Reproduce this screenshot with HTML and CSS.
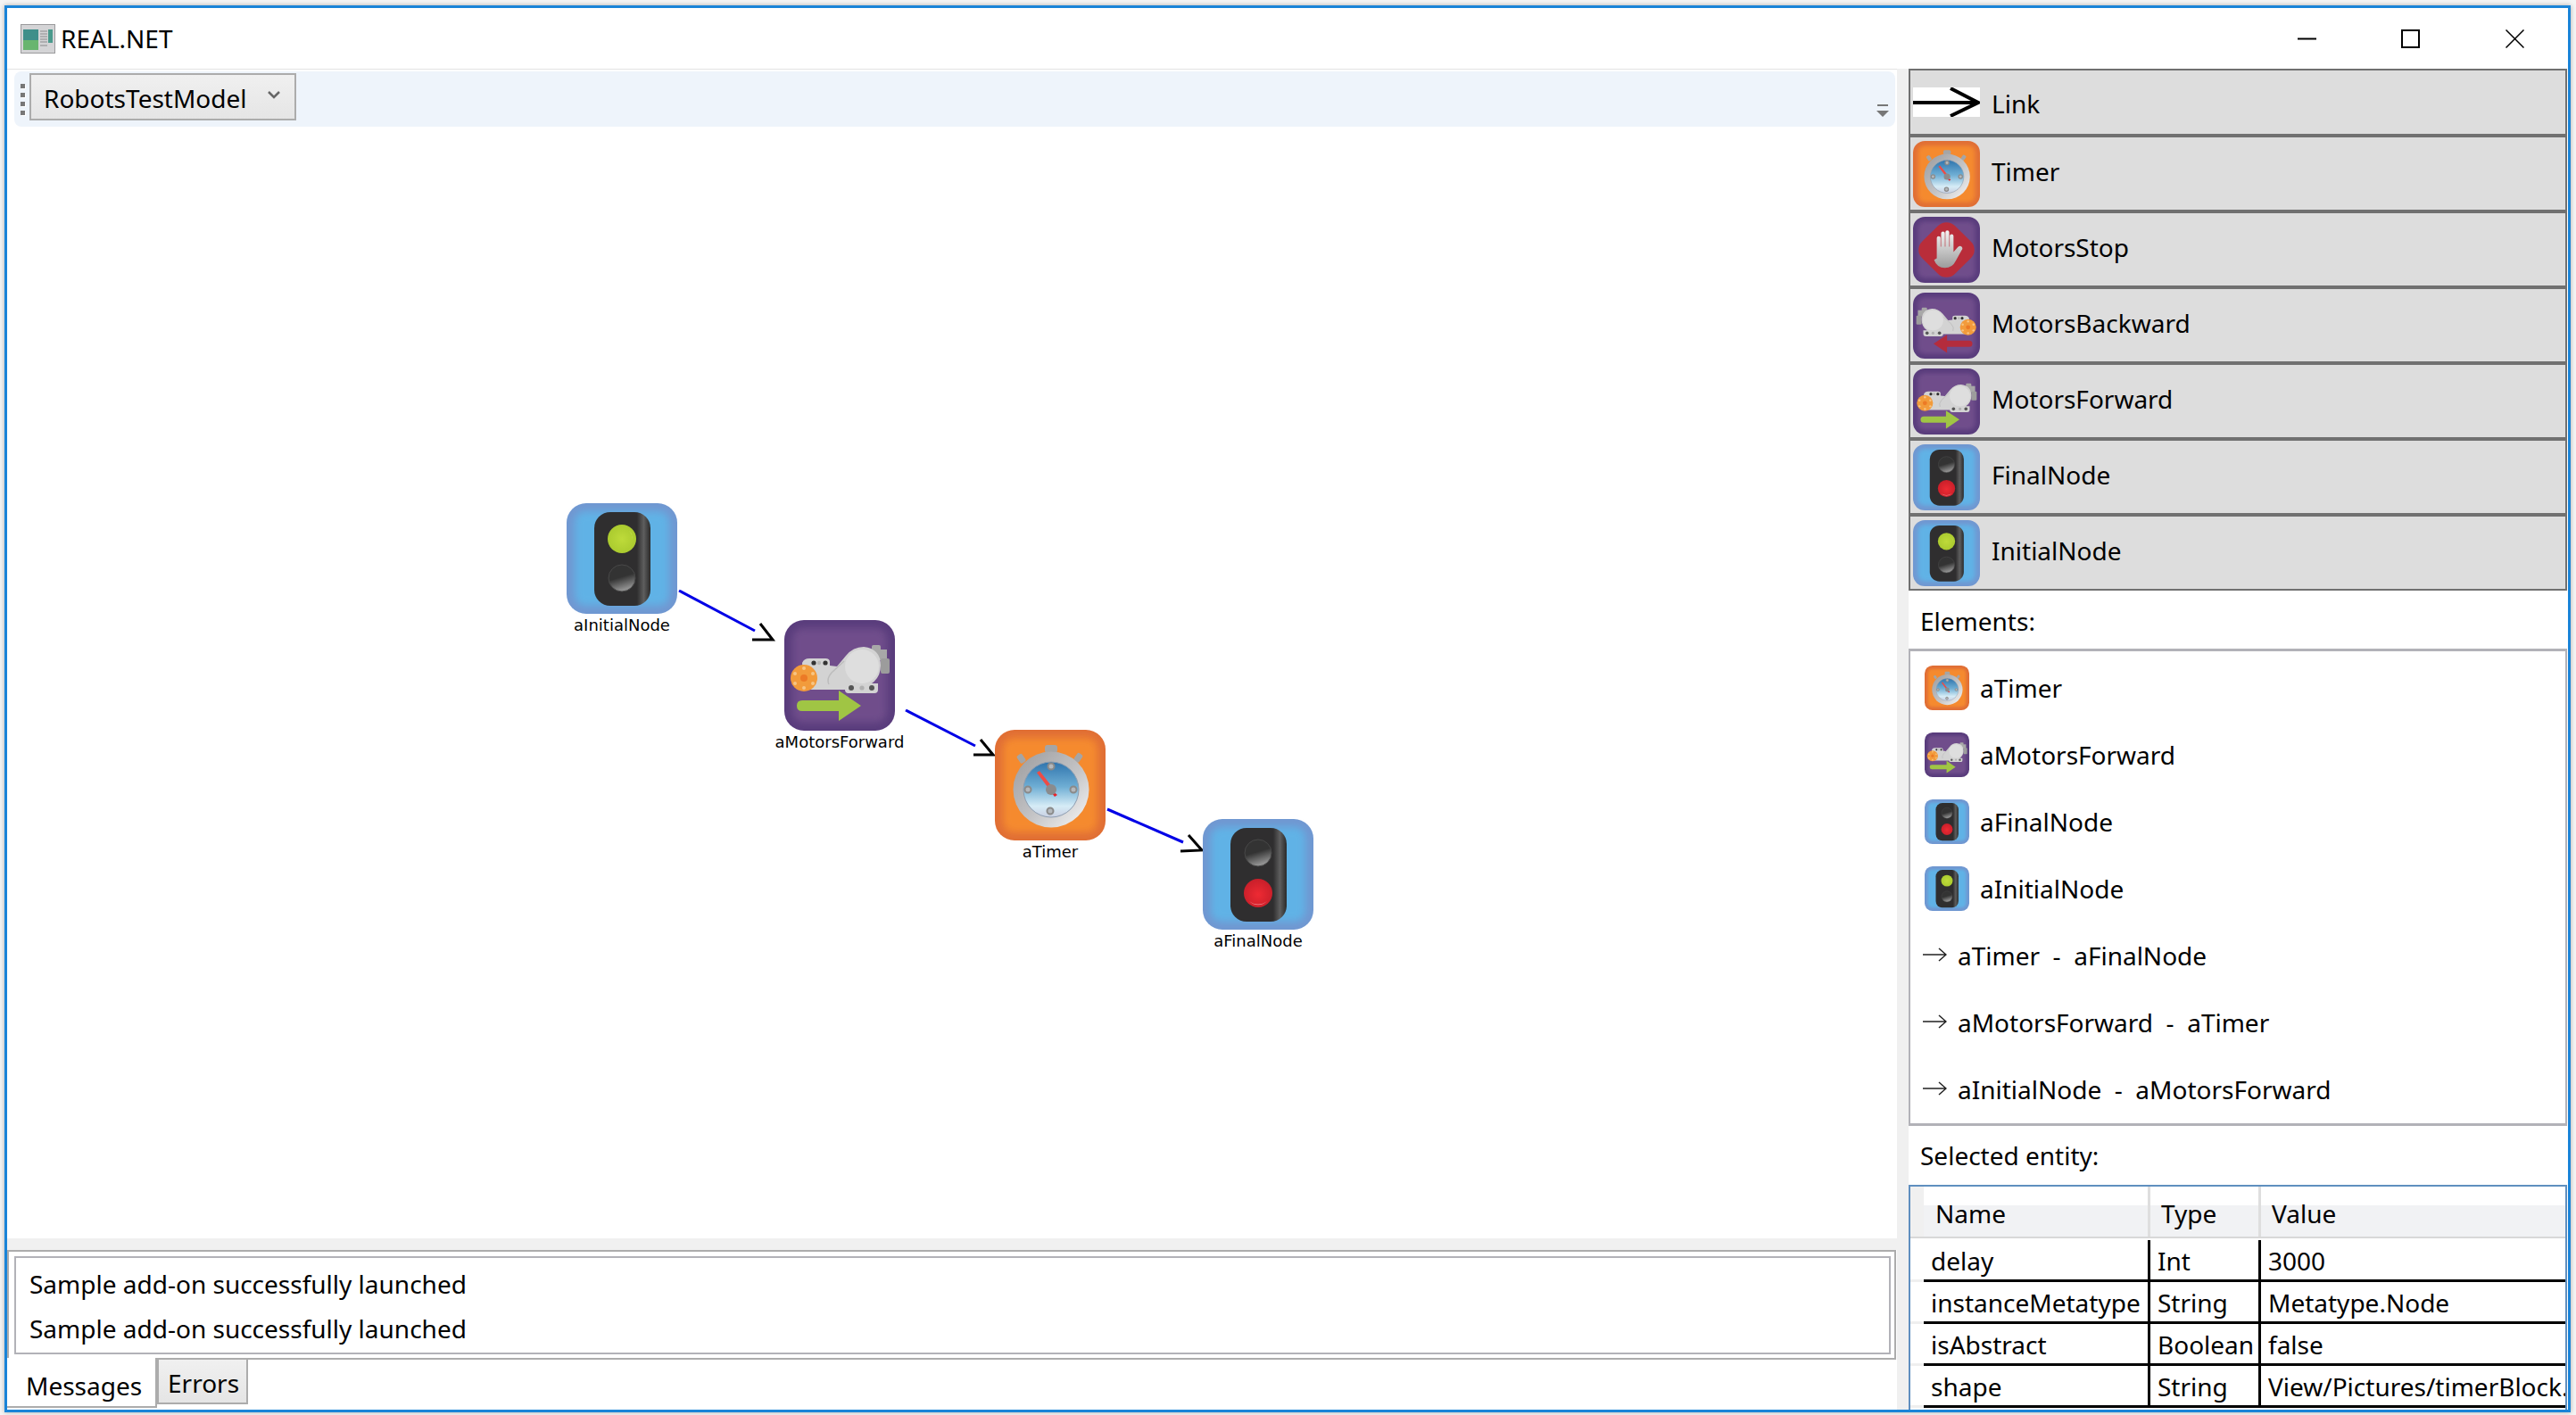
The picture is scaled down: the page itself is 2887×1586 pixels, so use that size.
FILE: index.html
```html
<!DOCTYPE html>
<html>
<head>
<meta charset="UTF-8">
<title>REAL.NET</title>
<link rel="stylesheet" href="styles.css">
</head>
<body>

<!-- shared icon parts, all drawn in a 124 x 124 box -->
<svg class="defs" width="0" height="0">
  <defs>
    <filter id="soft" x="-20%" y="-20%" width="140%" height="140%"><feGaussianBlur stdDeviation="4"/></filter>
    <linearGradient id="lampOff" x1="0" y1="0" x2="0.3" y2="1">
      <stop offset="0.55" stop-color="#333"/><stop offset="1" stop-color="#909090"/>
    </linearGradient>
    <radialGradient id="lampRed" cx="0.5" cy="0.55" r="0.55">
      <stop offset="0" stop-color="#ee2a33"/><stop offset="1" stop-color="#c81f2a"/>
    </radialGradient>
    <radialGradient id="lampGreen" cx="0.5" cy="0.5" r="0.55">
      <stop offset="0" stop-color="#bedb3a"/><stop offset="1" stop-color="#a9c92e"/>
    </radialGradient>
    <linearGradient id="dial" x1="0" y1="0" x2="0" y2="1">
      <stop offset="0" stop-color="#2f74ad"/><stop offset="0.45" stop-color="#6faed4"/>
      <stop offset="0.8" stop-color="#d6ecf6"/><stop offset="1" stop-color="#c9cfe2"/>
    </linearGradient>
    <linearGradient id="ring" x1="0" y1="0" x2="1" y2="1">
      <stop offset="0" stop-color="#9a9a9c"/><stop offset="0.55" stop-color="#c4c4c6"/><stop offset="1" stop-color="#f8f8f8"/>
    </linearGradient>
    <linearGradient id="handFill" x1="0" y1="0" x2="0" y2="1">
      <stop offset="0" stop-color="#f4f4f4"/><stop offset="1" stop-color="#9c9c9c"/>
    </linearGradient>
    <linearGradient id="barSide" x1="0" y1="0" x2="1" y2="0">
      <stop offset="0" stop-color="#2f2e2f"/><stop offset="0.76" stop-color="#2f2e2f"/>
      <stop offset="0.88" stop-color="#5e5e5e"/><stop offset="1" stop-color="#2a2a2a"/>
    </linearGradient>

    <g id="bgBlue">
      <rect width="124" height="124" rx="22" fill="#7097d1"/>
      <rect x="9" y="9" width="106" height="106" rx="12" fill="#60b2e6" filter="url(#soft)"/>
    </g>
    <g id="bgPurple">
      <rect width="124" height="124" rx="22" fill="#593c7c"/>
      <rect x="9" y="9" width="106" height="106" rx="12" fill="#6f4d8b" filter="url(#soft)"/>
    </g>
    <g id="bgOrange">
      <rect width="124" height="124" rx="22" fill="#e06e35"/>
      <rect x="9" y="9" width="106" height="106" rx="12" fill="#f58a2e" filter="url(#soft)"/>
    </g>

    <g id="lightBody">
      <rect x="31" y="10" width="63" height="105" rx="18" fill="url(#barSide)"/>
    </g>

    <g id="icInitial">
      <use href="#bgBlue"/><use href="#lightBody"/>
      <circle cx="62" cy="40" r="16" fill="url(#lampGreen)"/>
      <path d="M70 31a12 12 0 0 1 4 10a14 14 0 0 0 -4 -10z" fill="#e4f0a0"/>
      <circle cx="62" cy="84" r="15" fill="url(#lampOff)" stroke="#484848" stroke-width="1"/>
    </g>
    <g id="icFinal">
      <use href="#bgBlue"/><use href="#lightBody"/>
      <circle cx="62" cy="38" r="15" fill="url(#lampOff)" stroke="#484848" stroke-width="1"/>
      <circle cx="62" cy="83" r="16" fill="url(#lampRed)"/>
      <path d="M52 92a14 14 0 0 0 20 0a16 16 0 0 1 -20 0z" fill="#f28a8f"/>
    </g>

    <g id="motor">
      <rect x="98" y="28" width="10" height="14" rx="2" fill="#a8a8a8"/>
      <rect x="106" y="33" width="9" height="12" fill="#a8a8a8"/>
      <rect x="108" y="43" width="10" height="17" rx="2" fill="#9c9c9c"/>
      <path d="M20 48q2 -5 8 -5h18q5 0 5 4v4l8 1l10 -12q8 -10 20 -10q19 2 19 21q0 13 -10 20h7v7q0 4 -4 4h-29q-4 0 -4 -4h-46z" fill="#d3d3d3"/>
      <circle cx="87" cy="52" r="19" fill="#dedede"/>
      <path d="M50 72q-3 -6 3 -13l14 -13" fill="none" stroke="#bcbcbc" stroke-width="1.5"/>
      <circle cx="33" cy="48" r="2.6" fill="#333"/><circle cx="39" cy="48" r="2.2" fill="#b8b8b8"/><circle cx="46" cy="48" r="2.6" fill="#333"/>
      <circle cx="75" cy="76" r="3" fill="#555"/><circle cx="87" cy="76" r="2.6" fill="#b0b0b0"/><circle cx="98" cy="76" r="3" fill="#555"/>
    </g>
    <g id="wheel">
      <circle cx="22" cy="65" r="15" fill="#f29b3b"/>
      <circle cx="22" cy="65" r="4" fill="#ec7a26"/>
      <g fill="#f7c584">
        <circle cx="22" cy="54" r="2"/><circle cx="32" cy="60" r="2"/><circle cx="32" cy="71" r="2"/>
        <circle cx="22" cy="76" r="2"/><circle cx="12" cy="71" r="2"/><circle cx="12" cy="60" r="2"/>
      </g>
    </g>
    <g id="icForward">
      <use href="#bgPurple"/><use href="#motor"/><use href="#wheel"/>
      <path d="M20 90h41v-11l25 17l-25 17v-11h-41q-6 0 -6 -6t6 -6z" fill="#a0c544"/>
    </g>
    <g id="icBackward">
      <use href="#bgPurple"/>
      <g transform="matrix(-1 0 0 1 124 0)"><use href="#motor"/><use href="#wheel"/></g>
      <path d="M104 90h-41v-11l-25 17l25 17v-11h41q6 0 6 -6t-6 -6z" fill="#b42c3c"/>
    </g>

    <g id="icStop">
      <use href="#bgPurple"/>
      <rect x="19" y="19" width="86" height="86" rx="22" fill="#b92d3a" transform="rotate(45 62 62)"/>
      <g fill="url(#handFill)">
        <path d="M44 78v-38a3.5 3.5 0 0 1 7 0v16h1v-25a3.500 3.500 0 0 1 7 0v25h1v-27a3.500 3.500 0 0 1 7 0v27h1v-20a3.500 3.500 0 0 1 7 0v30l8 -9q4 -4 7 -1t0 7l-11 20q-6 13 -20 13q-15 0 -20 -15z"/>
      </g>
    </g>

    <g id="icTimer">
      <use href="#bgOrange"/>
      <rect x="56" y="17" width="14" height="9" rx="3" fill="#a5a5a5"/>
      <rect x="26" y="27" width="7" height="10" rx="2" fill="#a5a5a5" transform="rotate(-35 30 32)"/>
      <rect x="90" y="26" width="7" height="10" rx="2" fill="#a5a5a5" transform="rotate(35 93 31)"/>
      <circle cx="63" cy="67" r="42.500" fill="url(#ring)"/>
      <circle cx="63" cy="67" r="31" fill="url(#dial)" stroke="#8d9db0" stroke-width="1"/>
      <g fill="#b4b8bc" stroke="#8a8a8a" stroke-width="2">
        <circle cx="63" cy="41" r="3.500"/><circle cx="37" cy="67" r="3.500"/><circle cx="88" cy="67" r="3.500"/><circle cx="62" cy="91" r="3.500"/>
      </g>
      <path d="M47 48l3 -2l15 19l-3 3z" fill="#ee4b45"/>
      <path d="M64 68l6 5l-3 2l-4 -5z" fill="#e8222a"/>
      <circle cx="63" cy="67" r="6" fill="#8a8b8d"/>
    </g>
  </defs>
</svg>

<div class="window">
  <div class="titlebar">
    <svg class="app-icon" viewBox="0 0 39 33">
      <rect width="39" height="33" fill="#d4d4d6"/>
      <rect x="0.500" y="0.500" width="38" height="32" fill="none" stroke="#9a9a9c"/>
      <rect x="3" y="6" width="17" height="23" fill="#3f8f8a"/>
      <rect x="3" y="18" width="17" height="11" fill="#69b56f"/>
      <path d="M22 8h8M22 11h8M22 14h8M22 17h8M22 20h8M22 24h8" stroke="#8a8a8c" stroke-width="1"/>
      <rect x="31" y="6" width="5" height="15" fill="#4a9a8c"/>
    </svg>
    <span class="app-name">REAL.NET</span>
    <div class="win-buttons">
      <svg class="win-btn btn-min" viewBox="0 0 21 21"><path d="M0 10.500h21" stroke="#000" stroke-width="2"/></svg>
      <svg class="win-btn btn-max" viewBox="0 0 21 21"><rect x="1" y="1" width="19" height="19" fill="none" stroke="#000" stroke-width="2"/></svg>
      <svg class="win-btn btn-close" viewBox="0 0 21 21"><path d="M0.500 0.500l20 20M20.500 0.500l-20 20" stroke="#000" stroke-width="1.500"/></svg>
    </div>
  </div>

  <div class="main">
    <div class="left">
      <div class="toolbar">
        <div class="grip"><i></i><i></i><i></i><i></i></div>
        <div class="combo">
          <span>RobotsTestModel</span>
          <svg class="chevron" viewBox="0 0 14 9"><path d="M1 1l6 6l6 -6" fill="none" stroke="#666" stroke-width="2.500"/></svg>
        </div>
        <svg class="overflow" viewBox="0 0 14 14"><path d="M1 0h12v2h-12z M0 7h14l-7 7z" fill="#777"/></svg>
      </div>

      <div class="canvas">
        <svg class="edges" width="2118" height="1246">
          <g fill="none" stroke="#0000e6" stroke-width="3">
            <path d="M753 520L838 565"/>
            <path d="M1007 654L1085 694"/>
            <path d="M1233 765L1318 802"/>
          </g>
          <g fill="none" stroke="#000" stroke-width="3">
            <path d="M844 557L858 575L835 575"/>
            <path d="M1091 687L1105 704L1083 704"/>
            <path d="M1324 794L1339 811L1315 812"/>
          </g>
        </svg>

        <div class="node node-initial">
          <svg class="node-icon" viewBox="0 0 124 124"><use href="#icInitial"/></svg>
          <div class="node-label">aInitialNode</div>
        </div>
        <div class="node node-motors">
          <svg class="node-icon" viewBox="0 0 124 124"><use href="#icForward"/></svg>
          <div class="node-label">aMotorsForward</div>
        </div>
        <div class="node node-timer">
          <svg class="node-icon" viewBox="0 0 124 124"><use href="#icTimer"/></svg>
          <div class="node-label">aTimer</div>
        </div>
        <div class="node node-final">
          <svg class="node-icon" viewBox="0 0 124 124"><use href="#icFinal"/></svg>
          <div class="node-label">aFinalNode</div>
        </div>
      </div>

      <div class="hsplit"></div>

      <div class="tab-panel">
        <div class="messages">
          <div class="message">Sample add-on successfully launched</div>
          <div class="message">Sample add-on successfully launched</div>
        </div>
      </div>
      <div class="tabs">
        <div class="tab tab-active">Messages</div>
        <div class="tab tab-other">Errors</div>
      </div>
    </div>

    <div class="vsplit"></div>

    <div class="right">
      <div class="palette">
        <div class="tool tool-link">
          <svg class="link-icon" viewBox="0 0 75 33"><rect width="75" height="33" fill="#fff"/><path d="M0 17h73M42 1l31 16l-31 15" fill="none" stroke="#000" stroke-width="4"/></svg>
          <span>Link</span>
        </div>
        <div class="tool"><svg class="tool-icon" viewBox="0 0 124 124" preserveAspectRatio="none"><use href="#icTimer"/></svg><span>Timer</span></div>
        <div class="tool"><svg class="tool-icon" viewBox="0 0 124 124" preserveAspectRatio="none"><use href="#icStop"/></svg><span>MotorsStop</span></div>
        <div class="tool"><svg class="tool-icon" viewBox="0 0 124 124" preserveAspectRatio="none"><use href="#icBackward"/></svg><span>MotorsBackward</span></div>
        <div class="tool"><svg class="tool-icon" viewBox="0 0 124 124" preserveAspectRatio="none"><use href="#icForward"/></svg><span>MotorsForward</span></div>
        <div class="tool"><svg class="tool-icon" viewBox="0 0 124 124" preserveAspectRatio="none"><use href="#icFinal"/></svg><span>FinalNode</span></div>
        <div class="tool"><svg class="tool-icon" viewBox="0 0 124 124" preserveAspectRatio="none"><use href="#icInitial"/></svg><span>InitialNode</span></div>
      </div>

      <div class="section-label label-elements">Elements:</div>
      <div class="elements">
        <div class="element"><svg class="element-icon" viewBox="0 0 124 124"><use href="#icTimer"/></svg><span>aTimer</span></div>
        <div class="element"><svg class="element-icon" viewBox="0 0 124 124"><use href="#icForward"/></svg><span>aMotorsForward</span></div>
        <div class="element"><svg class="element-icon" viewBox="0 0 124 124"><use href="#icFinal"/></svg><span>aFinalNode</span></div>
        <div class="element"><svg class="element-icon" viewBox="0 0 124 124"><use href="#icInitial"/></svg><span>aInitialNode</span></div>
        <div class="element element-link"><svg class="link-arrow" viewBox="0 0 27 20"><path d="M0 10h26M18 3l8 7l-8 7" fill="none" stroke="#222" stroke-width="1.500"/></svg><span>aTimer  -  aFinalNode</span></div>
        <div class="element element-link"><svg class="link-arrow" viewBox="0 0 27 20"><path d="M0 10h26M18 3l8 7l-8 7" fill="none" stroke="#222" stroke-width="1.500"/></svg><span>aMotorsForward  -  aTimer</span></div>
        <div class="element element-link"><svg class="link-arrow" viewBox="0 0 27 20"><path d="M0 10h26M18 3l8 7l-8 7" fill="none" stroke="#222" stroke-width="1.500"/></svg><span>aInitialNode  -  aMotorsForward</span></div>
      </div>

      <div class="section-label label-selected">Selected entity:</div>
      <div class="grid">
        <div class="grid-head">
          <div class="corner"></div>
          <div class="head-cell col-name">Name</div>
          <div class="head-cell col-type">Type</div>
          <div class="head-cell col-value">Value</div>
        </div>
        <div class="grid-body">
          <div class="grid-row">
            <div class="row-head"></div>
            <div class="cell col-name">delay</div>
            <div class="cell col-type">Int</div>
            <div class="cell col-value">3000</div>
          </div>
          <div class="grid-row">
            <div class="row-head"></div>
            <div class="cell col-name">instanceMetatype</div>
            <div class="cell col-type">String</div>
            <div class="cell col-value">Metatype.Node</div>
          </div>
          <div class="grid-row">
            <div class="row-head"></div>
            <div class="cell col-name">isAbstract</div>
            <div class="cell col-type">Boolean</div>
            <div class="cell col-value">false</div>
          </div>
          <div class="grid-row">
            <div class="row-head"></div>
            <div class="cell col-name">shape</div>
            <div class="cell col-type">String</div>
            <div class="cell col-value">View/Pictures/timerBlock.</div>
          </div>
        </div>
      </div>
    </div>
  </div>
</div>

</body>
</html>
```

FILE: styles.css
```css
* {
    box-sizing: border-box;
}
html, body {
    margin: 0;
    height: 100%;
}
body {
    width: 2887px;
    height: 1586px;
    padding: 6px 6px 3px 5px;
    background-color: #f4f4f4;
    font-family: "Noto Sans", sans-serif;
    font-size: 28px;
    color: #000;
    overflow: hidden;
}
.defs {
    position: absolute;
}
.window {
    height: 100%;
    border: 3px solid #1a84d8;
    background-color: #fff;
    display: flex;
    flex-direction: column;
    box-shadow: 0 0 5px rgba(0,0,0,0.3);
}

/* title bar */
.titlebar {
    height: 68px;
    flex: none;
    display: flex;
    align-items: center;
    padding-left: 15px;
}
.app-icon {
    width: 39px;
    height: 33px;
    margin-right: 6px;
}
.win-buttons {
    margin-left: auto;
    display: flex;
    align-items: center;
}
.win-btn {
    width: 21px;
    height: 21px;
}
.btn-min {
    margin-right: 95px;
}
.btn-max {
    margin-right: 96px;
}
.btn-close {
    margin-right: 49px;
}

.main {
    flex: 1;
    min-height: 0;
    display: flex;
}

/* left side */
.left {
    width: 2118px;
    flex: none;
    display: flex;
    flex-direction: column;
    border-top: 1px solid #e2e2e2;
}
.toolbar {
    height: 62px;
    flex: none;
    margin: 2px 2px 0 8px;
    background-color: #eef4fb;
    border-radius: 8px;
    display: flex;
    align-items: center;
    padding-left: 7px;
}
.grip {
    width: 10px;
    display: flex;
    flex-direction: column;
    gap: 5px;
}
.grip i {
    display: block;
    width: 5px;
    height: 5px;
    background-color: #777;
    box-shadow: 1px 1px 0 #fff;
}
.combo {
    width: 299px;
    height: 53px;
    margin-bottom: 5px;
    border: 2px solid #acacac;
    background: linear-gradient(#f0f0f0, #e5e5e5);
    display: flex;
    align-items: center;
    padding: 2px 0 0 14px;
}
.chevron {
    width: 14px;
    height: 9px;
    margin-left: auto;
    margin-right: 16px;
    margin-top: -6px;
}
.overflow {
    width: 14px;
    height: 14px;
    margin-left: auto;
    margin-right: 7px;
    margin-top: 25px;
}
.canvas {
    flex: 1;
    min-height: 0;
    position: relative;
    background-color: #fff;
}
.edges {
    position: absolute;
    left: 0;
    top: 0;
}
.node {
    position: absolute;
    width: 124px;
    display: flex;
    flex-direction: column;
    align-items: center;
}
.node-initial { left: 627px; top: 422px; }
.node-motors { left: 871px; top: 553px; }
.node-timer { left: 1107px; top: 676px; }
.node-final { left: 1340px; top: 776px; }
.node-icon {
    width: 124px;
    height: 124px;
    flex: none;
}
.node-label {
    font-family: "DejaVu Sans", sans-serif;
    font-size: 18px;
    line-height: 25px;
    white-space: nowrap;
}
.hsplit {
    height: 13px;
    flex: none;
    background-color: #f0f0f0;
}
.tab-panel {
    height: 123px;
    flex: none;
    margin-right: 1px;
    border: 2px solid #acacac;
    padding: 5px 4px 4px 6px;
}
.messages {
    height: 110px;
    border: 2px solid #b2b2b8;
    padding: 4px 0 0 15px;
}
.message {
    height: 50px;
    line-height: 50px;
}
.tabs {
    height: 56px;
    flex: none;
    display: flex;
    align-items: flex-start;
    background-color: #fff;
}
.tab {
    position: relative;
    margin-top: -2px;
}
.tab-active {
    width: 168px;
    height: 56px;
    padding: 4px 0 0 21px;
    background-color: #fff;
    border-right: 2px solid #acacac;
    border-bottom: 2px solid #acacac;
    line-height: 54px;
}
.tab-other {
    width: 102px;
    height: 52px;
    padding-left: 10px;
    background: linear-gradient(#f0f0f0, #e5e5e5);
    border: 2px solid #acacac;
    line-height: 52px;
}

.vsplit {
    width: 13px;
    flex: none;
    background-color: #f0f0f0;
}

/* right side */
.right {
    flex: 1;
    min-width: 0;
    display: flex;
    flex-direction: column;
}
.palette {
    flex: none;
    margin-right: 1px;
}
.tool {
    height: 85px;
    border: 2px solid #707070;
    background-color: #dddddd;
    display: flex;
    align-items: center;
    padding-left: 3px;
}
.tool span {
    margin-bottom: 5px;
}
.tool-link {
    height: 75px;
}
.tool-link span {
    margin: 3px 0 0;
}
.tool-icon, .link-icon {
    width: 75px;
    flex: none;
    margin-right: 13px;
}
.tool-icon {
    height: 74px;
}
.link-icon {
    height: 33px;
}
.section-label {
    flex: none;
    display: flex;
    align-items: center;
    padding-left: 13px;
}
.label-elements {
    height: 65px;
    padding-top: 3px;
}
.label-selected {
    height: 66px;
}
.elements {
    height: 535px;
    flex: none;
    margin-right: 1px;
    border: 2px solid #b2b2b8;
    border-top-width: 3px;
    border-bottom-width: 3px;
    padding-top: 3px;
}
.element {
    height: 75px;
    display: flex;
    align-items: center;
    padding-left: 16px;
    white-space: pre;
}
.element-icon {
    width: 50px;
    height: 50px;
    flex: none;
    margin-right: 12px;
}
.element-link {
    padding-left: 14px;
}
.link-arrow {
    width: 27px;
    height: 20px;
    flex: none;
    margin-right: 12px;
    margin-top: -2px;
}
.grid {
    flex: 1;
    min-height: 0;
    margin-right: 1px;
    border: 2px solid #5f8fbf;
    border-bottom: 0;
    overflow: hidden;
}
.grid-head {
    height: 58px;
    display: flex;
    background: linear-gradient(#fff 0, #fff 38%, #f1f2f4 38%);
    border-bottom: 2px solid #d8d8d8;
}
.corner {
    width: 15px;
    flex: none;
    background-color: #f0f0f0;
}
.head-cell {
    line-height: 60px;
    border-right: 3px solid #dedede;
    padding-left: 13px;
}
.grid-body {
    padding-top: 2px;
}
.grid-row {
    height: 47px;
    display: flex;
}
.row-head {
    width: 15px;
    flex: none;
    border-bottom: 3px solid #efefef;
}
.cell {
    height: 47px;
    line-height: 46px;
    border-bottom: 3px solid #000;
    border-right: 3px solid #000;
    padding-left: 8px;
    white-space: nowrap;
}
.col-name {
    width: 254px;
    flex: none;
}
.col-type {
    width: 124px;
    flex: none;
}
.col-value {
    flex: 1;
    min-width: 0;
    border-right: 0;
}
.head-cell.col-type, .head-cell.col-value {
    padding-left: 12px;
}
```
